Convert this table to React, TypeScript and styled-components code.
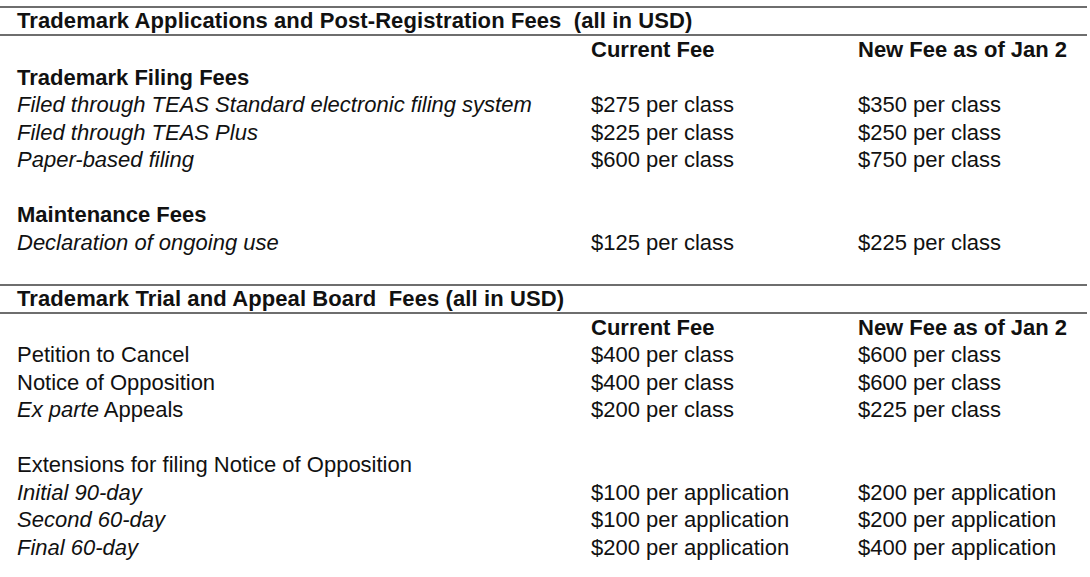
import React from "react";
import styled, { createGlobalStyle } from "styled-components";

const Global = createGlobalStyle`
  html, body { margin: 0; padding: 0; background: #ffffff; }
  body { font-family: "Liberation Sans", Arial, sans-serif; color: #111111; }
`;

const Page = styled.div`
  padding-top: 6px;
  width: 1087px;
`;

const Section = styled.section<{ $gapAfter?: boolean }>`
  display: flex;
  flex-direction: column;
  padding-bottom: ${(p) => (p.$gapAfter ? "27.5px" : "0")};
`;

const TitleBar = styled.div`
  border-top: 2px solid #6e6e6e;
  border-bottom: 2px solid #6e6e6e;
  height: 26px;
  box-sizing: content-box;
  display: flex;
  align-items: center;
  padding-left: 17px;
  font-size: 22px;
  font-weight: 700;
  letter-spacing: 0.1px;
  white-space: pre;
  line-height: 26px;
`;

const Row = styled.div`
  display: grid;
  grid-template-columns: 574px 267px 1fr;
  padding-left: 17px;
  padding-top: 1px;
  box-sizing: border-box;
  height: 27.5px;
  line-height: 26.5px;
  font-size: 22px;
  white-space: pre;
`;

const Cell = styled.div<{ $bold?: boolean; $italic?: boolean }>`
  font-weight: ${(p) => (p.$bold ? 700 : 400)};
  font-style: ${(p) => (p.$italic ? "italic" : "normal")};
`;

const Em = styled.span`
  font-style: italic;
`;

type Line = {
  label?: React.ReactNode;
  cur?: string;
  next?: string;
  bold?: boolean;
  italic?: boolean;
  header?: boolean;
};

const section1: Line[] = [
  { header: true },
  { label: "Trademark Filing Fees", bold: true },
  { label: "Filed through TEAS Standard electronic filing system", italic: true, cur: "$275 per class", next: "$350 per class" },
  { label: "Filed through TEAS Plus", italic: true, cur: "$225 per class", next: "$250 per class" },
  { label: "Paper-based filing", italic: true, cur: "$600 per class", next: "$750 per class" },
  {},
  { label: "Maintenance Fees", bold: true },
  { label: "Declaration of ongoing use", italic: true, cur: "$125 per class", next: "$225 per class" },
];

const section2: Line[] = [
  { header: true },
  { label: "Petition to Cancel", cur: "$400 per class", next: "$600 per class" },
  { label: "Notice of Opposition", cur: "$400 per class", next: "$600 per class" },
  { label: (<><Em>Ex parte</Em> Appeals</>), cur: "$200 per class", next: "$225 per class" },
  {},
  { label: "Extensions for filing Notice of Opposition" },
  { label: "Initial 90-day", italic: true, cur: "$100 per application", next: "$200 per application" },
  { label: "Second 60-day", italic: true, cur: "$100 per application", next: "$200 per application" },
  { label: "Final 60-day", italic: true, cur: "$200 per application", next: "$400 per application" },
];

const FeeRow = ({ line }: { line: Line }) =>
  line.header ? (
    <Row>
      <Cell />
      <Cell $bold>Current Fee</Cell>
      <Cell $bold>New Fee as of Jan 2</Cell>
    </Row>
  ) : (
    <Row>
      <Cell $bold={line.bold} $italic={line.italic}>{line.label ?? ""}</Cell>
      <Cell>{line.cur ?? ""}</Cell>
      <Cell>{line.next ?? ""}</Cell>
    </Row>
  );

export default function App() {
  return (
    <>
      <Global />
      <Page>
        <Section $gapAfter>
          <TitleBar>Trademark Applications and Post-Registration Fees  (all in USD)</TitleBar>
          {section1.map((l, i) => (
            <FeeRow key={i} line={l} />
          ))}
        </Section>
        <Section>
          <TitleBar>Trademark Trial and Appeal Board  Fees (all in USD)</TitleBar>
          {section2.map((l, i) => (
            <FeeRow key={i} line={l} />
          ))}
        </Section>
      </Page>
    </>
  );
}
